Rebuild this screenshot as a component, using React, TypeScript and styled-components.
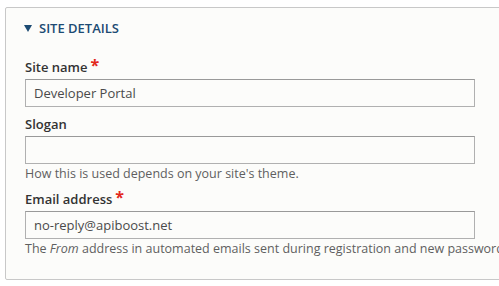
import { styled, createGlobalStyle } from "styled-components";

const GlobalStyle = createGlobalStyle`
    html, body {
        margin: 0;
        padding: 0;
        background: #ffffff;
        overflow: hidden;
    }
    body {
        font-family: "Open Sans", "Noto Sans", sans-serif;
        color: #333;
    }
`;

const Fieldset = styled.section`
    margin: 7px 0 0 5px;
    width: 540px;
    box-sizing: border-box;
    border: 1px solid #c8c8c8;
    border-radius: 2px;
    background: #fcfcfa;
    padding: 11px 18px 22px 19px;
`;

const Summary = styled.div`
    display: flex;
    align-items: center;
    gap: 7px;
    height: 18px;
    font-size: 13px;
    font-weight: 600;
    line-height: 18px;
    color: #1d4b73;
    text-transform: uppercase;
`;

const Arrow = styled.span`
    width: 0;
    height: 0;
    margin-left: -1px;
    border-left: 4px solid transparent;
    border-right: 4px solid transparent;
    border-top: 7px solid #1d4b73;
    margin-top: 1px;
`;

const Items = styled.div`
    display: flex;
    flex-direction: column;
    gap: 8px;
    margin-top: 21px;
`;

const FormItem = styled.div`
    display: flex;
    flex-direction: column;
`;

const Label = styled.label`
    font-size: 13px;
    font-weight: 600;
    line-height: 18px;
    color: #333;
`;

const Required = styled.span`
    color: #e3281c;
    font-size: 16px;
    font-weight: 700;
    margin-left: 3px;
    line-height: 10px;
    vertical-align: 1px;
`;

const Input = styled.input`
    margin-top: 3px;
    width: 450px;
    height: 28px;
    box-sizing: border-box;
    border: 1px solid #b0b0b0;
    border-top-color: #999;
    border-radius: 0;
    background: #fcfcfa;
    padding: 0 8px;
    font-family: "Open Sans", "Noto Sans", sans-serif;
    font-size: 13px;
    color: #4a4a4a;
    outline: none;
`;

const Description = styled.div`
    margin-top: 1px;
    font-size: 12.5px;
    line-height: 17px;
    color: #5f5f5f;
    white-space: nowrap;
`;

interface FieldProps {
    label: string,
    value?: string,
    required?: boolean,
    children?: React.ReactNode
}

const Field = (props: FieldProps) => {
  return (
    <FormItem>
      <Label>
        {props.label}
        {props.required && <Required>*</Required>}
      </Label>
      <Input type="text" defaultValue={props.value ?? ""} />
      {props.children && <Description>{props.children}</Description>}
    </FormItem>
  );
};

export default function App() {
  return (
    <>
      <GlobalStyle />
      <Fieldset>
        <Summary>
          <Arrow />
          Site details
        </Summary>
        <Items>
          <Field label="Site name" value="Developer Portal" required />
          <Field label="Slogan">
            How this is used depends on your site's theme.
          </Field>
          <Field label="Email address" value="no-reply@apiboost.net" required>
            The <em>From</em> address in automated emails sent during registration and new password
          </Field>
        </Items>
      </Fieldset>
    </>
  );
}
